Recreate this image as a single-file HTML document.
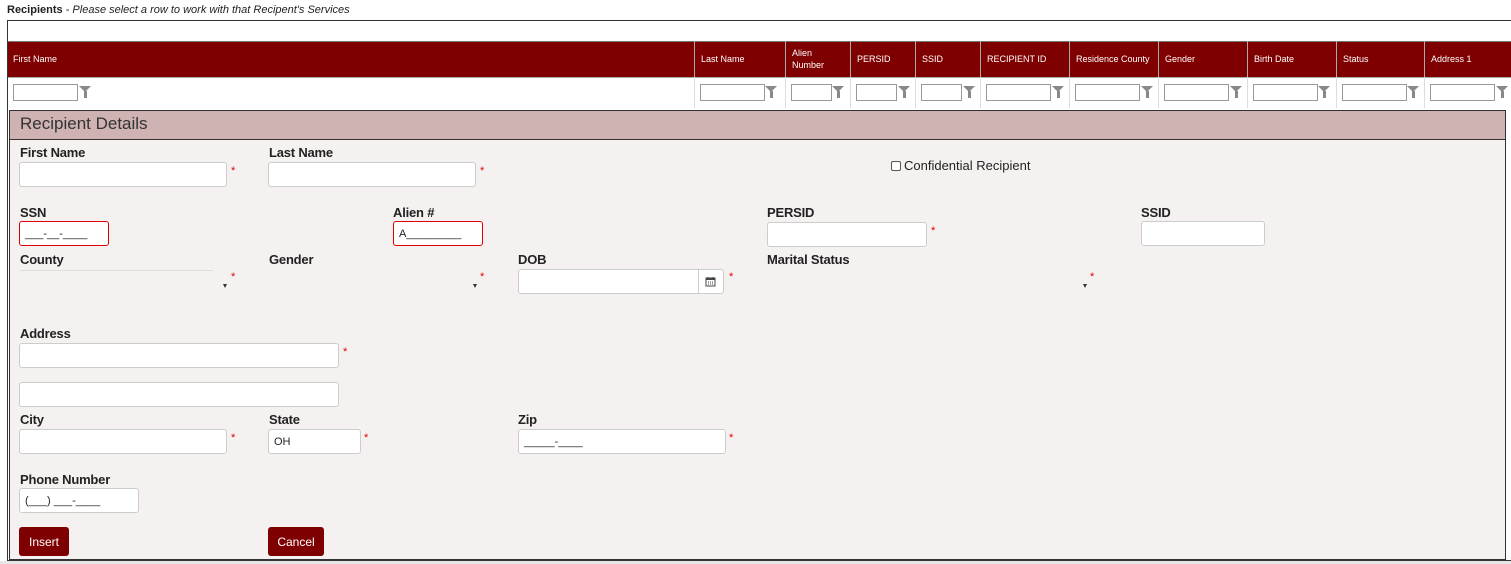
<!DOCTYPE html>
<html><head><meta charset="utf-8"><style>
*{box-sizing:border-box;margin:0;padding:0}
body{width:1511px;height:564px;background:#fff;font-family:"Liberation Sans",sans-serif;position:relative;overflow:hidden;color:#222}
.a{position:absolute}
.lbl{position:absolute;font-weight:bold;font-size:13px;color:#222;letter-spacing:-0.2px}
.inp{position:absolute;background:#fff;border:1px solid #ccc;border-radius:3px;height:25px;font-size:11px;padding:6px 5px;color:#222}
.red{border-color:#e00000}
.star{position:absolute;color:#e00000;font-size:11px}
.th{position:absolute;top:41px;height:36px;color:#fff;font-size:9px;display:flex;align-items:center;padding-left:6px;border-left:1px solid #aaa;line-height:12px}
.fc{position:absolute;top:77px;height:31px;border-left:1px solid #ddd}
.fi{position:absolute;top:84px;height:17px;border:1px solid #999;background:#fff}
.fn{position:absolute;top:86px;width:0;height:0;border-left:6px solid transparent;border-right:6px solid transparent;border-top:6px solid #888}
.fn:after{content:"";position:absolute;left:-1.5px;top:-1px;width:3px;height:7px;background:#888}
.arr{position:absolute;width:0;height:0;border-left:2px solid transparent;border-right:2px solid transparent;border-top:4px solid #333}
.btn{position:absolute;background:#7f0000;color:#fff;font-size:12px;border-radius:3px;height:29px;top:527px;display:flex;align-items:center;justify-content:center}
</style></head><body>
<div class="a" style="left:7px;top:4px;font-size:11px"><b>Recipients</b> - <i>Please select a row to work with that Recipent's Services</i></div>
<div class="a" style="left:7px;top:20px;width:1510px;height:541px;border:1px solid #333;border-right:none"></div>
<div class="a" style="left:8px;top:41px;width:1503px;height:36px;background:#7f0000;border-top:1px solid #777"></div>
<div class="a" style="left:8px;top:77px;width:1503px;height:31px;background:#fff;border-top:1px solid #aaa"></div>
<div class="th" style="left:7px;border:none">First Name</div>
<div class="th" style="left:694px">Last Name</div>
<div class="th" style="left:785px">Alien<br>Number</div>
<div class="th" style="left:850px">PERSID</div>
<div class="th" style="left:915px">SSID</div>
<div class="th" style="left:980px">RECIPIENT ID</div>
<div class="th" style="left:1069px">Residence County</div>
<div class="th" style="left:1158px">Gender</div>
<div class="th" style="left:1247px">Birth Date</div>
<div class="th" style="left:1336px">Status</div>
<div class="th" style="left:1424px">Address 1</div>
<div class="fi" style="left:13px;width:65px"></div><div class="fn" style="left:79px"></div>
<div class="fc" style="left:694px"></div><div class="fi" style="left:700px;width:65px"></div><div class="fn" style="left:765px"></div>
<div class="fc" style="left:785px"></div><div class="fi" style="left:791px;width:41px"></div><div class="fn" style="left:832px"></div>
<div class="fc" style="left:850px"></div><div class="fi" style="left:856px;width:41px"></div><div class="fn" style="left:898px"></div>
<div class="fc" style="left:915px"></div><div class="fi" style="left:921px;width:41px"></div><div class="fn" style="left:963px"></div>
<div class="fc" style="left:980px"></div><div class="fi" style="left:986px;width:65px"></div><div class="fn" style="left:1052px"></div>
<div class="fc" style="left:1069px"></div><div class="fi" style="left:1075px;width:65px"></div><div class="fn" style="left:1141px"></div>
<div class="fc" style="left:1158px"></div><div class="fi" style="left:1164px;width:65px"></div><div class="fn" style="left:1230px"></div>
<div class="fc" style="left:1247px"></div><div class="fi" style="left:1253px;width:65px"></div><div class="fn" style="left:1318px"></div>
<div class="fc" style="left:1336px"></div><div class="fi" style="left:1342px;width:65px"></div><div class="fn" style="left:1407px"></div>
<div class="fc" style="left:1424px"></div><div class="fi" style="left:1430px;width:65px"></div><div class="fn" style="left:1496px"></div>
<div class="a" style="left:9px;top:110px;width:1497px;height:450px;background:#f5f1f0;border:1px solid #333"></div>
<div class="a" style="left:10px;top:111px;width:1495px;height:29px;background:#cfb2b2;border-bottom:1px solid #333;font-size:17px;padding:3px 0 0 10px;color:#333">Recipient Details</div>
<div class="a" style="left:0;top:561px;width:1511px;height:3px;background:#e6e6e6"></div>

<div class="lbl" style="left:20px;top:145px">First Name</div>
<div class="inp" style="left:19px;top:162px;width:208px"></div><div class="star" style="left:231px;top:165px">*</div>
<div class="lbl" style="left:269px;top:145px">Last Name</div>
<div class="inp" style="left:268px;top:162px;width:208px"></div><div class="star" style="left:480px;top:165px">*</div>
<div class="a" style="left:891px;top:161px;width:10px;height:10px;border:1px solid #555;border-radius:2px;background:#fff"></div>
<div class="a" style="left:904px;top:158px;font-size:13px;color:#222">Confidential Recipient</div>

<div class="lbl" style="left:20px;top:205px">SSN</div>
<div class="inp red" style="left:19px;top:221px;width:90px">___-__-____</div>
<div class="lbl" style="left:393px;top:205px">Alien #</div>
<div class="inp red" style="left:393px;top:221px;width:90px">A_________</div>
<div class="lbl" style="left:767px;top:205px">PERSID</div>
<div class="inp" style="left:767px;top:222px;width:160px"></div><div class="star" style="left:931px;top:225px">*</div>
<div class="lbl" style="left:1141px;top:205px">SSID</div>
<div class="inp" style="left:1141px;top:221px;width:124px"></div>

<div class="lbl" style="left:20px;top:252px">County</div>
<div class="a" style="left:20px;top:270px;width:193px;height:1px;background:#e2dddd"></div>
<div class="arr" style="left:223px;top:284px"></div><div class="star" style="left:231px;top:271px">*</div>
<div class="lbl" style="left:269px;top:252px">Gender</div>
<div class="arr" style="left:473px;top:284px"></div><div class="star" style="left:480px;top:271px">*</div>
<div class="lbl" style="left:518px;top:252px">DOB</div>
<div class="inp" style="left:518px;top:269px;width:206px"></div>
<div class="a" style="left:698px;top:270px;width:1px;height:23px;background:#ccc"></div>
<svg class="a" style="left:705px;top:276px" width="11" height="11" viewBox="0 0 11 11"><rect x="1" y="2" width="9" height="8" fill="none" stroke="#444"/><rect x="1" y="2" width="9" height="2" fill="#444"/><path d="M3 1v2M8 1v2M3 6h1M5 6h1M7 6h1M3 8h1M5 8h1M7 8h1" stroke="#444"/></svg>
<div class="star" style="left:729px;top:271px">*</div>
<div class="lbl" style="left:767px;top:252px">Marital Status</div>
<div class="arr" style="left:1083px;top:284px"></div><div class="star" style="left:1090px;top:271px">*</div>

<div class="lbl" style="left:20px;top:326px">Address</div>
<div class="inp" style="left:19px;top:343px;width:320px"></div><div class="star" style="left:343px;top:346px">*</div>
<div class="inp" style="left:19px;top:382px;width:320px"></div>
<div class="lbl" style="left:20px;top:412px">City</div>
<div class="inp" style="left:19px;top:429px;width:208px"></div><div class="star" style="left:231px;top:432px">*</div>
<div class="lbl" style="left:269px;top:412px">State</div>
<div class="inp" style="left:268px;top:429px;width:93px">OH</div><div class="star" style="left:364px;top:432px">*</div>
<div class="lbl" style="left:518px;top:412px">Zip</div>
<div class="inp" style="left:518px;top:429px;width:208px">_____-____</div><div class="star" style="left:729px;top:432px">*</div>
<div class="lbl" style="left:20px;top:472px">Phone Number</div>
<div class="inp" style="left:19px;top:488px;width:120px">(___) ___-____</div>
<div class="btn" style="left:19px;width:50px">Insert</div>
<div class="btn" style="left:268px;width:56px">Cancel</div>
</body></html>
